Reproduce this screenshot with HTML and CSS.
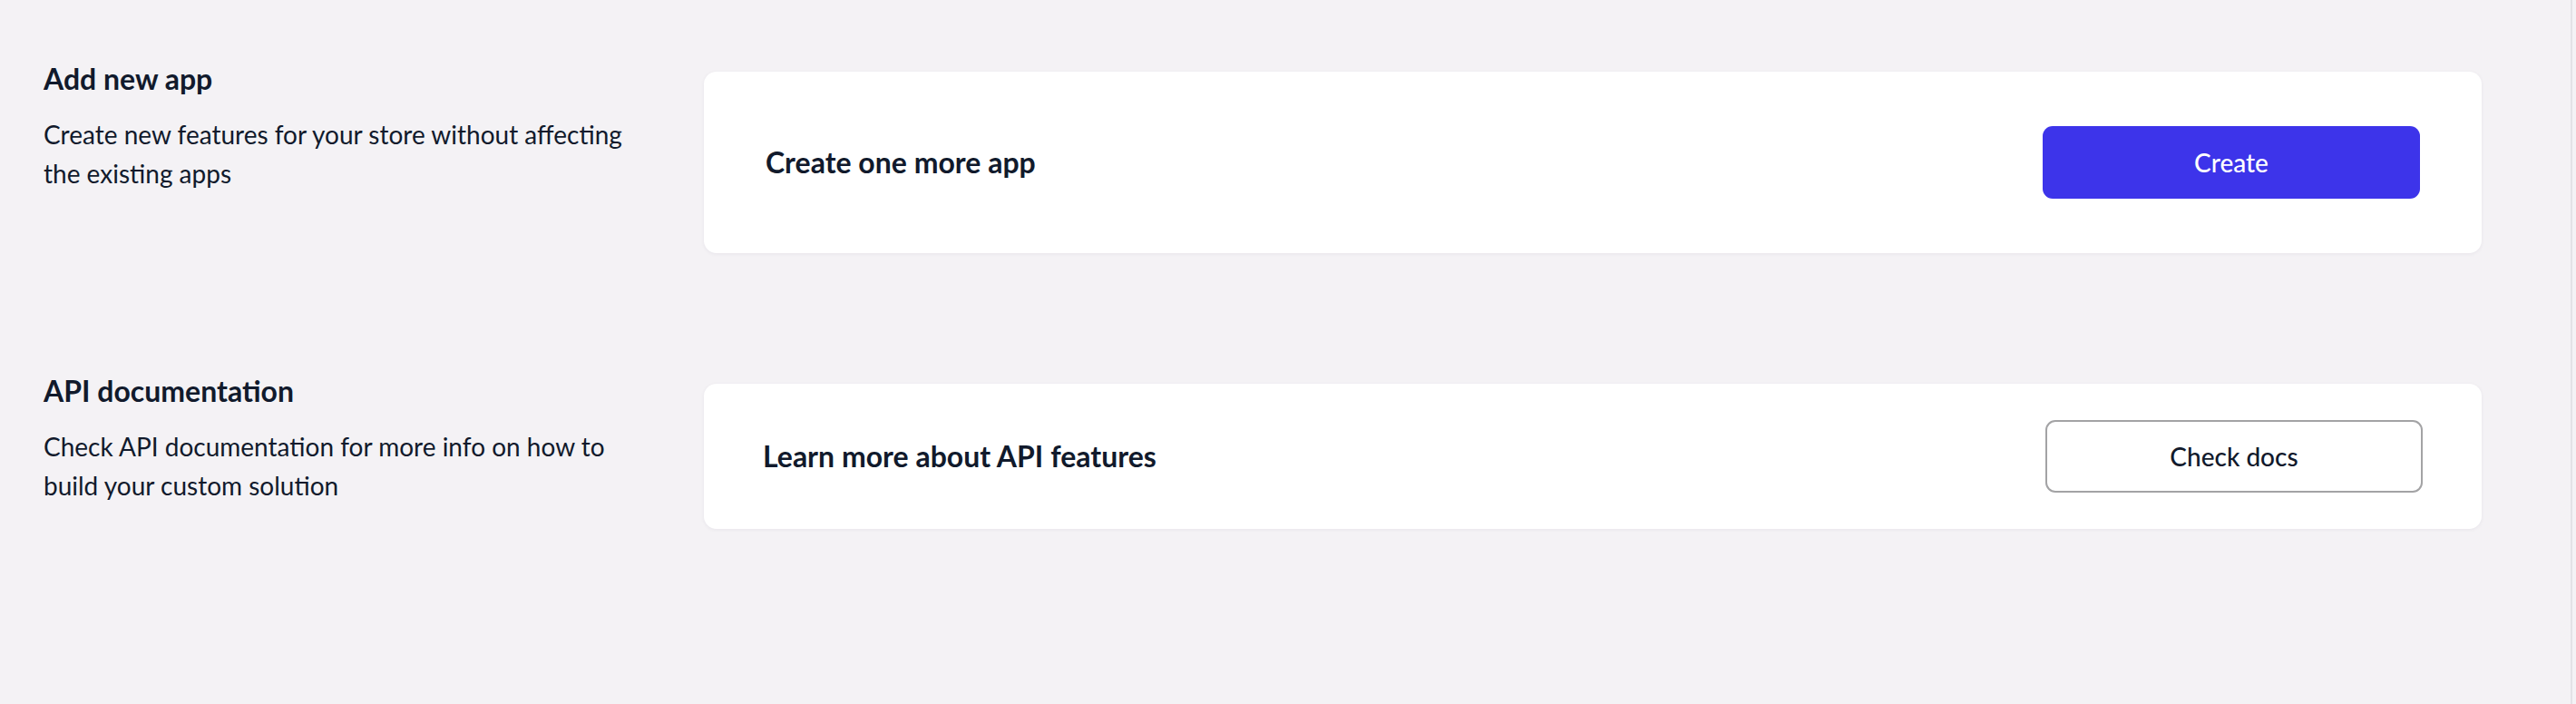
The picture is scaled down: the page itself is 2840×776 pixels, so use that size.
FILE: index.html
```html
<!DOCTYPE html>
<html lang="en">
<head>
<meta charset="utf-8">
<title>Apps</title>
<link rel="stylesheet" href="styles.css">
</head>
<body>
<main class="page">
  <section class="section">
    <div class="info">
      <h2 class="info-title">Add new app</h2>
      <p class="info-text">Create new features for your store without affecting the existing apps</p>
    </div>
    <div class="card card-tall">
      <span class="card-title">Create one more app</span>
      <button class="btn btn-primary" type="button">Create</button>
    </div>
  </section>
  <section class="section">
    <div class="info">
      <h2 class="info-title">API documentation</h2>
      <p class="info-text">Check API documentation for more info on how to build your custom solution</p>
    </div>
    <div class="card card-short">
      <span class="card-title">Learn more about API features</span>
      <button class="btn btn-outline" type="button">Check docs</button>
    </div>
  </section>
</main>
</body>
</html>
```
FILE: styles.css
```css
html, body {
  margin: 0;
  padding: 0;
  background: #f4f2f5;
}
body {
  font-family: Lato, "Noto Sans", sans-serif;
  color: #111a2c;
  width: 2840px;
  height: 776px;
  overflow: hidden;
}
.page {
  box-sizing: border-box;
  width: 2836px;
  height: 776px;
  border-right: 2px solid #e3e2e6;
  padding: 67px 0 0 48px;
  display: flex;
  flex-direction: column;
  gap: 132px;
}
.section {
  display: grid;
  grid-template-columns: 728px 1960px;
  align-items: start;
}
.info-title {
  margin: 0;
  font-size: 32px;
  line-height: 40px;
  font-weight: 700;
}
.info-text {
  margin: 20px 0 0;
  font-size: 28px;
  line-height: 43px;
  font-weight: 400;
  max-width: 660px;
}
.card {
  margin-top: 12px;
  box-sizing: border-box;
  background: #ffffff;
  border-radius: 14px;
  box-shadow: 0 1px 4px rgba(30, 20, 60, 0.06);
  display: flex;
  align-items: center;
  justify-content: space-between;
}
.card-tall {
  height: 200px;
  padding: 0 68px 0 68px;
}
.card-short {
  height: 160px;
  padding: 0 65px 0 65px;
}
.card-title {
  font-size: 32px;
  font-weight: 700;
  line-height: 40px;
}
.btn {
  box-sizing: border-box;
  width: 416px;
  height: 80px;
  border-radius: 11px;
  font-family: Lato, "Noto Sans", sans-serif;
  font-size: 28px;
  font-weight: 500;
  cursor: pointer;
}
.btn-primary {
  background: #3d34ea;
  color: #ffffff;
  border: none;
}
.btn-outline {
  background: #ffffff;
  color: #111a2c;
  border: 2px solid #a3a3a5;
}
```
